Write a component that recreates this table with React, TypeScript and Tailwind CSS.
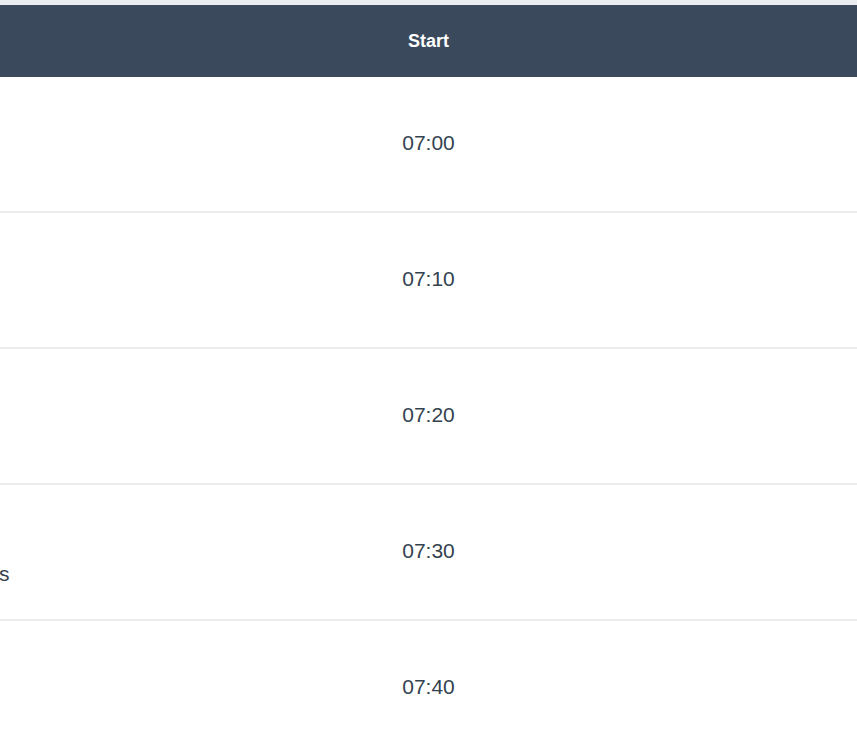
const rows = [
  { time: '07:00', side: '' },
  { time: '07:10', side: '' },
  { time: '07:20', side: '' },
  { time: '07:30', side: 's' },
  { time: '07:40', side: '' },
];

export default function App() {
  return (
    <div className="w-[857px] h-[752px] bg-white overflow-hidden font-['Liberation_Sans',Arial,sans-serif]">
      <div className="h-[5px] bg-[#e9edef]" />
      <div className="h-[72px] bg-[#3a4a5c] flex items-center justify-center">
        <span className="text-[18px] font-bold text-white">Start</span>
      </div>
      {rows.map((row) => (
        <div key={row.time} className="relative h-[136px] border-b-2 border-[#eceeee] flex items-center justify-center">
          {row.side && (
            <span className="absolute left-[-1px] top-[73px] text-[21px] text-[#34424f]">{row.side}</span>
          )}
          <span className="text-[21px] text-[#34424f] -mt-[2px]">{row.time}</span>
        </div>
      ))}
    </div>
  );
}
